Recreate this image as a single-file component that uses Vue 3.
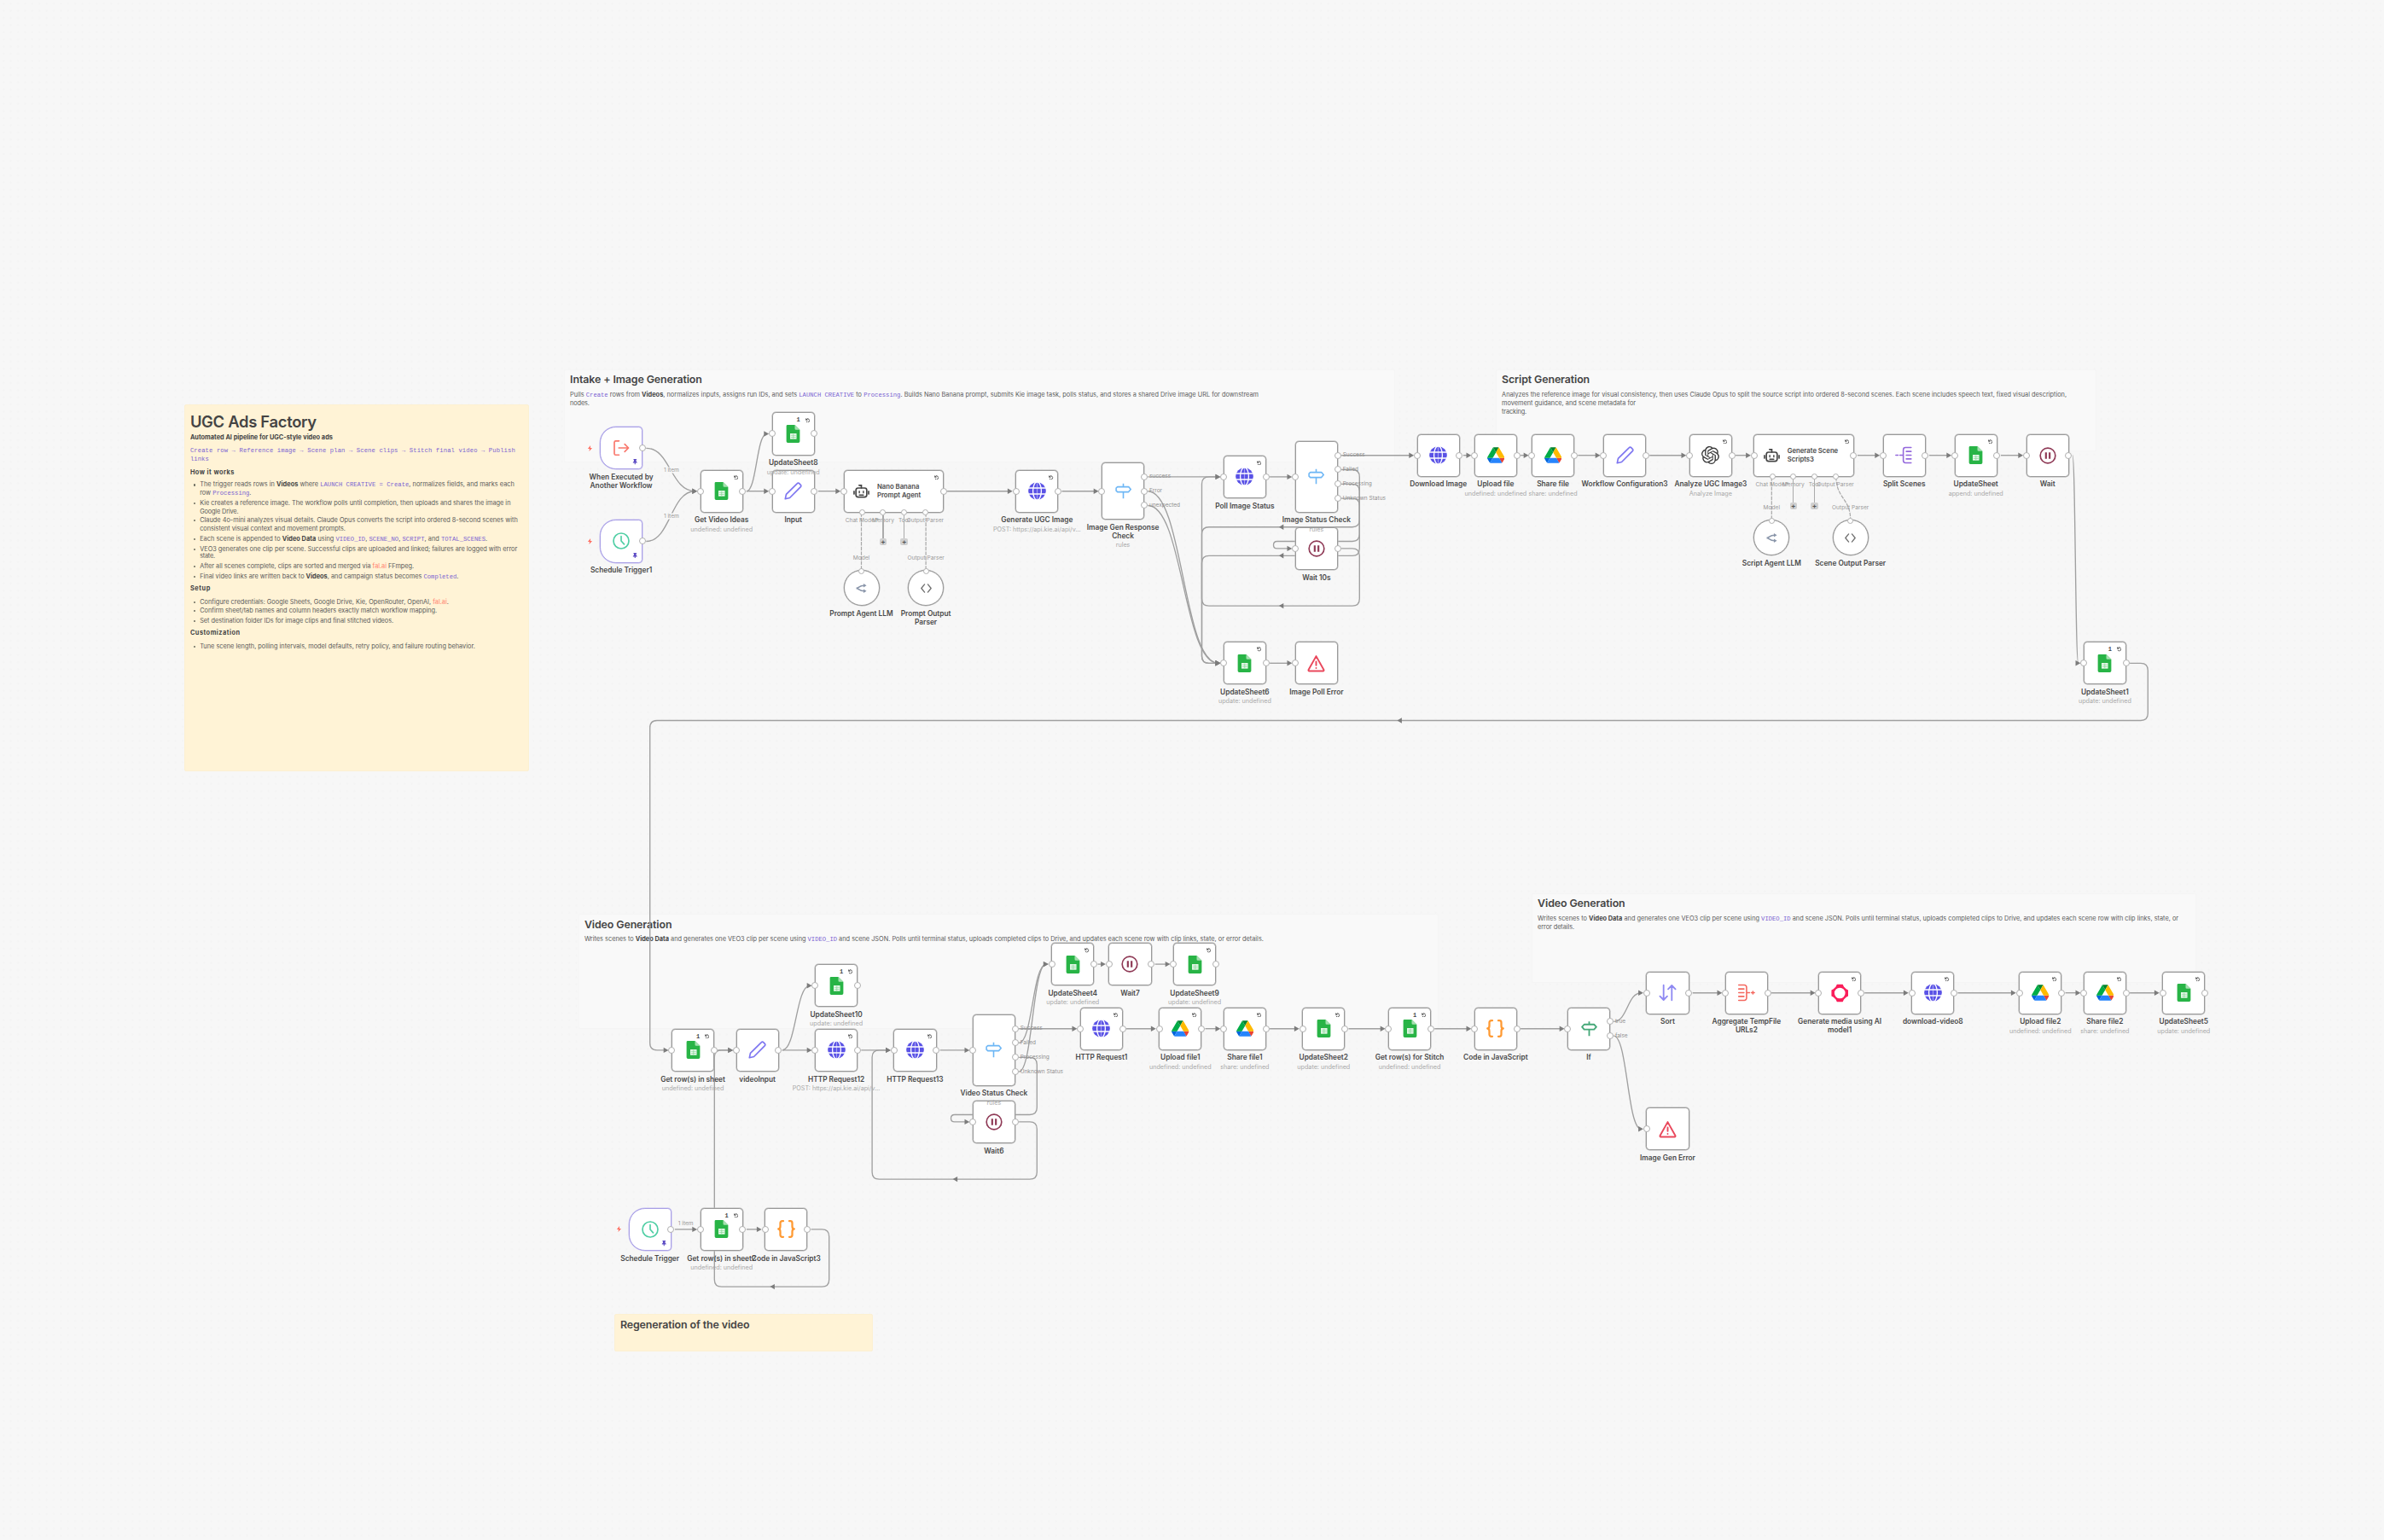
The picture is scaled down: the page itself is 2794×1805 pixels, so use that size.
<script setup>
// Canvas coordinates are expressed in grid cells; one cell is 8.4px on screen.
const G = 8.4
const OX = 820.5
const OY = 550.5
const px = (x) => OX + x * G
const py = (y) => OY + y * G

// Spreads a line of text to a given width through letter spacing.
const vFit = {
  mounted(el, { value }) {
    if (!value) return
    const n = el.textContent.length
    const natural = el.getBoundingClientRect().width
    el.style.letterSpacing = (value - natural) / n + 'px'
  },
}

const U = 'undefined: undefined'
const UP = 'update: undefined'
const POST = 'POST: https://api.kie.ai/api/v...'
const nodes = [
  { x: -14, y: -6, t: 'trigger', i: 'exec', l: 'When Executed by\nAnother Workflow' },
  { x: -14, y: 7, t: 'trigger', i: 'clock', l: 'Schedule Trigger1' },
  { x: 0, y: 0, i: 'sheet', l: 'Get Video Ideas', s: U, r: 1 },
  { x: 10, y: -8, i: 'sheet', l: 'UpdateSheet8', s: UP, r: 1, o: 1 },
  { x: 10, y: 0, i: 'pencil', l: 'Input' },
  { x: 20, y: 0, t: 'agent', i: 'robot', l: 'Nano Banana\nPrompt Agent', r: 1 },
  { x: 20, y: 14, t: 'sub', i: 'router', l: 'Prompt Agent LLM', e: 'Model' },
  { x: 29, y: 14, t: 'sub', i: 'code', l: 'Prompt Output\nParser', e: 'Output Parser' },
  { x: 44, y: 0, i: 'globe', l: 'Generate UGC Image', s: POST, r: 1 },
  { x: 56, y: -1, h: 8, i: 'sign', l: 'Image Gen Response\nCheck', s: 'rules', out: [[2, 'success'], [4, 'Error'], [6, 'unexpected']] },
  { x: 73, y: -2, i: 'globe', l: 'Poll Image Status', r: 1 },
  { x: 83, y: -4, h: 10, i: 'sign', l: 'Image Status Check', s: 'rules', out: [[2, 'Success'], [4, 'Failed'], [6, 'Processing'], [8, 'Unknown Status']] },
  { x: 83, y: 8, i: 'pause', l: 'Wait 10s' },
  { x: 73, y: 24, i: 'sheet', l: 'UpdateSheet6', s: UP, r: 1 },
  { x: 83, y: 24, i: 'warn', l: 'Image Poll Error', end: 1 },
  { x: 100, y: -5, i: 'globe', l: 'Download Image' },
  { x: 108, y: -5, i: 'drive', l: 'Upload file', s: U },
  { x: 116, y: -5, i: 'drive', l: 'Share file', s: 'share: undefined' },
  { x: 126, y: -5, i: 'pencil', l: 'Workflow Configuration3' },
  { x: 138, y: -5, i: 'openai', l: 'Analyze UGC Image3', s: 'Analyze Image', r: 1 },
  { x: 147, y: -5, t: 'agent', i: 'robot', l: 'Generate Scene\nScripts3', r: 1 },
  { x: 147, y: 7, t: 'sub', i: 'router', l: 'Script Agent LLM', e: 'Model' },
  { x: 158, y: 7, t: 'sub', i: 'code', l: 'Scene Output Parser', e: 'Output Parser' },
  { x: 165, y: -5, i: 'split', l: 'Split Scenes' },
  { x: 175, y: -5, i: 'sheet', l: 'UpdateSheet', s: 'append: undefined', r: 1 },
  { x: 185, y: -5, i: 'pause', l: 'Wait' },
  { x: 193, y: 24, i: 'sheet', l: 'UpdateSheet1', s: UP, r: 1, o: 1 },

  { x: 16, y: 69, i: 'sheet', l: 'UpdateSheet10', s: UP, r: 1, o: 1 },
  { x: -4, y: 78, i: 'sheet', l: 'Get row(s) in sheet', s: U, r: 1, o: 1 },
  { x: 5, y: 78, i: 'pencil', l: 'videoInput' },
  { x: 16, y: 78, i: 'globe', l: 'HTTP Request12', s: POST, r: 1 },
  { x: 27, y: 78, i: 'globe', l: 'HTTP Request13', r: 1 },
  { x: 38, y: 76, h: 10, i: 'sign', l: 'Video Status Check', s: 'rules', out: [[2, 'Success'], [4, 'Failed'], [6, 'Processing'], [8, 'Unknown Status']] },
  { x: 38, y: 88, i: 'pause', l: 'Wait6' },
  { x: 49, y: 66, i: 'sheet', l: 'UpdateSheet4', s: UP, r: 1 },
  { x: 57, y: 66, i: 'pause', l: 'Wait7' },
  { x: 66, y: 66, i: 'sheet', l: 'UpdateSheet9', s: UP, r: 1 },
  { x: 53, y: 75, i: 'globe', l: 'HTTP Request1', r: 1 },
  { x: 64, y: 75, i: 'drive', l: 'Upload file1', s: U, r: 1 },
  { x: 73, y: 75, i: 'drive', l: 'Share file1', s: 'share: undefined', r: 1 },
  { x: 84, y: 75, i: 'sheet', l: 'UpdateSheet2', s: UP, r: 1 },
  { x: 96, y: 75, i: 'sheet', l: 'Get row(s) for Stitch', s: U, r: 1, o: 1 },
  { x: 108, y: 75, i: 'braces', l: 'Code in JavaScript' },
  { x: 121, y: 75, i: 'signif', l: 'If', out: [[2, 'true'], [4, 'false']] },
  { x: 132, y: 70, i: 'sort', l: 'Sort' },
  { x: 132, y: 89, i: 'warn', l: 'Image Gen Error', end: 1 },
  { x: 143, y: 70, i: 'aggregate', l: 'Aggregate TempFile\nURLs2' },
  { x: 156, y: 70, i: 'media', l: 'Generate media using AI\nmodel1', r: 1 },
  { x: 169, y: 70, i: 'globe', l: 'download-video8', r: 1 },
  { x: 184, y: 70, i: 'drive', l: 'Upload file2', s: U, r: 1 },
  { x: 193, y: 70, i: 'drive', l: 'Share file2', s: 'share: undefined', r: 1 },
  { x: 204, y: 70, i: 'sheet', l: 'UpdateSheet5', s: UP, r: 1 },
  { x: -10, y: 103, t: 'trigger', i: 'clock', l: 'Schedule Trigger' },
  { x: 0, y: 103, i: 'sheet', l: 'Get row(s) in sheet2', s: U, r: 1, o: 1 },
  { x: 9, y: 103, i: 'braces', l: 'Code in JavaScript3' },
]

const nodeStyle = (n) => {
  const w = n.t === 'agent' ? 14 : n.t === 'sub' ? 5 : 6
  const h = n.t === 'sub' ? 5 : n.h || 6
  return { left: px(n.x) + 'px', top: py(n.y) + 'px', width: w * G + 'px', height: h * G + 'px' }
}

// Forward connections: [x1, y1, x2, y2, edge label]
const forward = [
  [-8, -3, 0, 3, '1 item'], [-8, 10, 0, 3, '1 item'], [6, 3, 10, -5], [6, 3, 10, 3], [16, 3, 20, 3],
  [34, 3, 44, 3], [50, 3, 56, 3], [62, 1, 73, 1], [62, 3, 73, 27], [62, 5, 73, 27], [79, 1, 83, 1],
  [79, 27, 83, 27], [89, -2, 100, -2], [106, -2, 108, -2], [114, -2, 116, -2], [122, -2, 126, -2],
  [132, -2, 138, -2], [144, -2, 147, -2], [161, -2, 165, -2], [171, -2, 175, -2], [181, -2, 185, -2],
  [191, -2, 193, 27],
  [2, 81, 5, 81], [11, 81, 16, 72], [11, 81, 16, 81], [22, 81, 27, 81], [33, 81, 38, 81],
  [44, 78, 53, 78], [44, 80, 49, 69], [44, 84, 49, 69], [55, 69, 57, 69], [63, 69, 66, 69],
  [59, 78, 64, 78], [70, 78, 73, 78], [79, 78, 84, 78], [90, 78, 96, 78], [102, 78, 108, 78],
  [114, 78, 121, 78], [127, 77, 132, 73], [127, 79, 132, 92], [138, 73, 143, 73], [149, 73, 156, 73],
  [162, 73, 169, 73], [175, 73, 184, 73], [190, 73, 193, 73], [199, 73, 204, 73],
  [-4, 106, 0, 106, '1 item'], [6, 106, 9, 106],
]
const curve = ([x1, y1, x2, y2]) => {
  const a = px(x1) + 4
  const b = px(x2) - 6
  const m = (a + b) / 2
  return `M${a} ${py(y1)}C${m} ${py(y1)} ${m} ${py(y2)} ${b} ${py(y2)}`
}

// Connections that run back to an earlier node: [x1, y1, x2, y2]
const backward = [
  [89, 0, 73, 27], [89, 2, 83, 11], [89, 4, 73, 27], [89, 11, 73, 1], [199, 27, -4, 81],
  [44, 82, 38, 91], [44, 91, 27, 81], [15, 106, 5, 81],
]
const loop = ([x1, y1, x2, y2]) => {
  const r = G
  const R = px(x1 + 3)
  const L = px(x2 - 3)
  const a = py(y1)
  const m = py(y1 + 8)
  const b = py(y2)
  const d = b > m ? 1 : -1
  const q = Math.min(r, Math.abs(b - m) / 2)
  return `M${px(x1) + 4} ${a}H${R - r}Q${R} ${a} ${R} ${a + r}V${m - r}Q${R} ${m} ${R - r} ${m}H${L + q}Q${L} ${m} ${L} ${m + d * q}V${b - d * q}Q${L} ${b} ${L + q} ${b}H${px(x2) - 6}`
}
const tip = (x, y) => `M${x - 5.8} ${y - 3.2}L${x} ${y}L${x - 5.8} ${y + 3.2}z`
const midTip = ([x1, y1, x2]) => {
  const x = (px(x1) + px(x2)) / 2 - 2
  const y = py(y1 + 8)
  return `M${x + 5.4} ${y - 3.2}L${x} ${y}L${x + 5.4} ${y + 3.2}z`
}

// Model and parser links hanging below the agents: [x1, y1, x2, y2]
const aiLinks = [[22.5, 6, 22.5, 14], [31.5, 6, 31.5, 14], [149.5, 1, 149.5, 7], [158.5, 1, 160.5, 7]]
const hang = ([x1, y1, x2, y2]) => {
  const m = (py(y1) + py(y2)) / 2
  return `M${px(x1)} ${py(y1)}C${px(x1)} ${m} ${px(x2)} ${m} ${px(x2)} ${py(y2)}`
}
const ports = ['Chat Model*', 'Memory', 'Tool', 'Output Parser']

// Each line: w = width, g = space above, k = kind, p = runs of [text, style]
const guide = [
  { w: 148, k: 'h1', p: [['UGC Ads Factory']] },
  { w: 167, g: 0, k: 'b', p: [['Automated AI pipeline for UGC-style video ads']] },
  { w: 381, g: 4.3, p: [['Create row → Reference image → Scene plan → Scene clips → Stitch final video → Publish', 'c']] },
  { w: 22, g: 0, p: [['links', 'c']] },
  { w: 52, g: 6.4, k: 'b', p: [['How it works']] },
  { w: 368.7, g: 4, k: 'li', p: [['The trigger reads rows in '], ['Videos', 'b'], [' where '], ['LAUNCH CREATIVE = Create', 'c'], [', normalizes fields, and marks each']] },
  { w: 60.3, g: -0.3, k: 'in', p: [['row '], ['Processing', 'c'], ['.']] },
  { w: 364.3, g: 1.7, k: 'li', p: [['Kie creates a reference image. The workflow polls until completion, then uploads and shares the image in']] },
  { w: 45.3, g: 0, k: 'in', p: [['Google Drive.']] },
  { w: 372.7, g: 0.3, k: 'li', p: [['Claude 4o-mini analyzes visual details. Claude Opus converts the script into ordered 8-second scenes with']] },
  { w: 170.7, g: 0, k: 'in', p: [['consistent visual context and movement prompts.']] },
  { w: 337, g: 2, k: 'li', p: [['Each scene is appended to '], ['Video Data', 'b'], [' using '], ['VIDEO_ID', 'c'], [', '], ['SCENE_NO', 'c'], [', '], ['SCRIPT', 'c'], [', and '], ['TOTAL_SCENES', 'c'], ['.']] },
  { w: 372, g: 2, k: 'li', p: [['VEO3 generates one clip per scene. Successful clips are uploaded and linked; failures are logged with error']] },
  { w: 17.7, g: -1.6, k: 'in', p: [['state.']] },
  { w: 251, g: 1.6, k: 'li', p: [['After all scenes complete, clips are sorted and merged via '], ['fal.ai', 'a'], [' FFmpeg.']] },
  { w: 303.3, g: 2, k: 'li', p: [['Final video links are written back to '], ['Videos', 'b'], [', and campaign status becomes '], ['Completed', 'c'], ['.']] },
  { w: 24, g: 4, k: 'b', p: [['Setup']] },
  { w: 291.7, g: 5.7, k: 'li', p: [['Configure credentials: Google Sheets, Google Drive, Kie, OpenRouter, OpenAI, '], ['fal.ai', 'a'], ['.']] },
  { w: 278, g: 0.3, k: 'li', p: [['Confirm sheet/tab names and column headers exactly match workflow mapping.']] },
  { w: 227, g: 2, k: 'li', p: [['Set destination folder IDs for image clips and final stitched videos.']] },
  { w: 58.7, g: 4, k: 'b', p: [['Customization']] },
  { w: 322.7, g: 6, k: 'li', p: [['Tune scene length, polling intervals, model defaults, retry policy, and failure routing behavior.']] },
]
const writes = [['Writes scenes to '], ['Video Data', 'b'], [' and generates one VEO3 clip per scene using '], ['VIDEO_ID', 'c']]
const tail = ' and scene JSON. Polls until terminal status, uploads completed clips to Drive, and updates each scene row with clip links, state, or'
const stickies = [
  { x: -72, y: -9.1, w: 48.1, h: 51.2, c: 'yellow guide', lines: guide },
  { x: -19, y: -14, w: 116, h: 13, c: 'pale', lines: [
    { w: 154.7, k: 'h2', p: [['Intake + Image Generation']] },
    { w: 807, g: 0, p: [['Pulls '], ['Create', 'c'], [' rows from '], ['Videos', 'b'], [', normalizes inputs, assigns run IDs, and sets '], ['LAUNCH CREATIVE', 'c'], [' to '], ['Processing', 'c'], ['. Builds Nano Banana prompt, submits Kie image task, polls status, and stores a shared Drive image URL for downstream']] },
    { w: 22.7, g: 0, p: [['nodes.']] },
  ] },
  { x: 111, y: -14, w: 83.8, h: 11.5, c: 'pale', lines: [
    { w: 103, k: 'h2', p: [['Script Generation']] },
    { w: 662, g: 0, p: [['Analyzes the reference image for visual consistency, then uses Claude Opus to split the source script into ordered 8-second scenes. Each scene includes speech text, fixed visual description,']] },
    { w: 157, g: 0, p: [['movement guidance, and scene metadata for']] },
    { w: 29, g: 0, p: [['tracking.']] },
  ] },
  { x: -17, y: 62, w: 120, h: 16, c: 'pale', lines: [
    { w: 102.5, k: 'h2', p: [['Video Generation']] },
    { w: 796, g: 0, p: [...writes, [tail + ' error details.']] },
  ] },
  { x: 116, y: 59.1, w: 92.8, h: 12.5, c: 'pale', lines: [
    { w: 102.5, k: 'h2', p: [['Video Generation']] },
    { w: 751, g: 0, p: [...writes, [tail]] },
    { w: 43, g: 0, p: [['error details.']] },
  ] },
  { x: -12, y: 117.8, w: 36.1, h: 5.2, c: 'yellow', lines: [{ w: 151.5, k: 'h2', p: [['Regeneration of the video']] }] },
]
const boxStyle = (s) => ({ left: px(s.x) + 'px', top: py(s.y) + 'px', width: s.w * G + 'px', height: s.h * G + 'px' })
</script>

<template>
  <main class="canvas">
    <svg class="defs" width="0" height="0">
      <symbol id="i-sheet" viewBox="0 0 24 24">
        <path fill="#28b446" d="M4.5 0h9.8L21 6.6V22a2 2 0 0 1-2 2H5a2 2 0 0 1-2-2V1.500A1.500 1.500 0 0 1 4.500 0z" />
        <path fill="#a5e0b0" d="M14.300 0 21 6.600h-5.200a1.500 1.500 0 0 1-1.500-1.500z" />
        <path fill="#eefaf0" d="M8 11.500h8.600v7.500H8z" />
        <path stroke="#8ad69a" stroke-width=".9" d="M8.800 14h7M8.800 16.500h7M12.300 12.200v6.200" />
      </symbol>
      <symbol id="i-drive" viewBox="0 0 87.3 78">
        <path d="m6.6 66.85 3.85 6.65c.8 1.4 1.95 2.5 3.3 3.3l13.75-23.8h-27.5c0 1.55.4 3.1 1.2 4.5z" fill="#0066da" />
        <path d="m43.65 25-13.75-23.8c-1.35.8-2.5 1.9-3.3 3.3l-25.4 44a9.06 9.06 0 0 0-1.2 4.5h27.5z" fill="#00ac47" />
        <path d="m73.55 76.8c1.35-.8 2.5-1.9 3.3-3.3l1.6-2.75 7.65-13.25c.8-1.4 1.2-2.95 1.2-4.5h-27.5l5.85 11.5z" fill="#ea4335" />
        <path d="m43.65 25 13.75-23.8c-1.35-.8-2.9-1.2-4.5-1.2h-18.5c-1.6 0-3.15.45-4.5 1.2z" fill="#00832d" />
        <path d="m59.8 53h-32.3l-13.75 23.8c1.35.8 2.9 1.2 4.5 1.2h50.8c1.6 0 3.15-.45 4.5-1.2z" fill="#2684fc" />
        <path d="m73.4 26.5-12.7-22c-.8-1.4-1.95-2.5-3.3-3.3l-13.75 23.8 16.15 28h27.45c0-1.55-.4-3.1-1.2-4.5z" fill="#ffba00" />
      </symbol>
      <symbol id="i-globe" viewBox="0 0 24 24">
        <circle cx="12" cy="12" r="11.8" fill="#5a52e6" />
        <g fill="none" stroke="#fff" stroke-width="1.5"><ellipse cx="12" cy="12" rx="5.600" ry="12.200" /><path d="M0 8h24M0 16h24" /></g>
        <path fill="none" stroke="#fff" stroke-width="1.3" d="M12 0v24" opacity=".45" />
      </symbol>
      <symbol id="i-pencil" viewBox="0 0 24 24">
        <path fill="none" stroke="#7d75f0" stroke-width="1.9" stroke-linejoin="round" d="m1.5 22.5 1.3-6L17.6 1.9a1.8 1.8 0 0 1 2.6 0l1.9 1.9a1.8 1.8 0 0 1 0 2.6L7.5 21.1z" />
      </symbol>
      <symbol id="i-robot" viewBox="0 0 24 24">
        <g fill="none" stroke="#454545" stroke-width="2.1"><rect x="4" y="7.6" width="16" height="13.4" rx="3.2" /><path d="M12 7.6V3.600H8.600M1.200 12.500v4M22.800 12.500v4" stroke-linecap="round" /></g>
        <path stroke="#454545" stroke-width="1.8" stroke-linecap="round" d="M9 12.300v2.400M15 12.300v2.400M9 18h6" />
      </symbol>
      <symbol id="i-router" viewBox="0 0 24 24">
        <path fill="none" stroke="#8a96aa" stroke-width="3" d="M1 12.3c5 0 6-6.2 17-6.2M1 11.7c5 0 6 6.2 17 6.2" />
        <path fill="#8a96aa" d="m16.5 1.8 6.7 4.3-6.7 4.2zM16.5 13.7l6.7 4.2-6.7 4.3z" />
      </symbol>
      <symbol id="i-code" viewBox="0 0 24 24">
        <path fill="none" stroke="#6e6e6e" stroke-width="2.4" stroke-linejoin="round" stroke-linecap="round" d="m8.5 3.5-7 8.5 7 8.5M15.5 3.5l7 8.5-7 8.5" />
      </symbol>
      <symbol id="i-sign" viewBox="0 0 24 24">
        <path fill="none" stroke="#6db6f5" stroke-width="2" stroke-linejoin="round" d="M3.400 5.800h16.400L23 9.600l-3.200 3.800H3.400L1.400 11.600V7.600zM12 1v4.800M12 13.400V23" />
      </symbol>
      <symbol id="i-signif" viewBox="0 0 24 24">
        <path fill="none" stroke="#45a878" stroke-width="2.3" stroke-linejoin="round" d="M4.6 6h14.6l3.4 3.6-3.4 3.8H4.6L1.4 9.6zM12 1.5V6M12 13.4V23" />
      </symbol>
      <symbol id="i-pause" viewBox="0 0 24 24">
        <g fill="none" stroke="#8f3a56" stroke-width="2"><circle cx="12" cy="12" r="10.6" /><path stroke-width="2.6" d="M9.4 7.6v8.8M14.6 7.6v8.8" /></g>
      </symbol>
      <symbol id="i-warn" viewBox="0 0 24 24">
        <path fill="none" stroke="#e9485c" stroke-width="2.2" stroke-linejoin="round" stroke-linecap="round" d="M12 2.4 1.8 20.6c-.4.8 0 1.6.9 1.6h18.6c.9 0 1.3-.8.9-1.6zM12 9.6v5M12 18.2v.2" />
      </symbol>
      <symbol id="i-exec" viewBox="0 0 24 24">
        <path fill="none" stroke="#f9776c" stroke-width="2" stroke-linejoin="round" stroke-linecap="round" d="M9 2.2H4.4A2 2 0 0 0 2.4 4v16a2 2 0 0 0 2 1.9H9M8.6 12h13.6M17 6.8l5.3 5.2-5.3 5.2" />
      </symbol>
      <symbol id="i-clock" viewBox="0 0 24 24">
        <path fill="none" stroke="#4fcea4" stroke-width="2" stroke-linecap="round" d="M12 1.2a10.8 10.8 0 1 0 0 21.6 10.8 10.8 0 0 0 0-21.6zM12 5.6V12l4.2 4.6" />
      </symbol>
      <symbol id="i-split" viewBox="0 0 24 24">
        <path fill="none" stroke="#9468dc" stroke-width="1.8" stroke-linecap="round" d="M1 12h3M6.5 12H11M21.5 1.800H14a3 3 0 0 0-3 3v14.400a3 3 0 0 0 3 3h7.500M15 7h6.500M15 12h6.500M15 17h6.500" />
      </symbol>
      <symbol id="i-aggregate" viewBox="0 0 24 24">
        <path fill="none" stroke="#f4685f" stroke-width="1.8" stroke-linecap="round" d="M2 1.800h7.500a3 3 0 0 1 3 3v14.400a3 3 0 0 1-3 3H2M2 7h7M2 12h7M2 17h7M13 12h3.500M19 12h4M21 10.200v3.600" />
      </symbol>
      <symbol id="i-openai" viewBox="0 0 24 24">
        <path fill="#3a3a3a" d="M22.28 9.82a5.98 5.98 0 0 0-.52-4.91 6.05 6.05 0 0 0-6.51-2.9A6.07 6.07 0 0 0 4.98 4.18a5.98 5.98 0 0 0-4 2.9 6.05 6.05 0 0 0 .75 7.1 5.98 5.98 0 0 0 .51 4.91 6.05 6.05 0 0 0 6.51 2.9A5.98 5.98 0 0 0 13.26 24a6.06 6.06 0 0 0 5.77-4.21 5.99 5.99 0 0 0 4-2.9 6.06 6.06 0 0 0-.75-7.07zm-9.02 12.61a4.48 4.48 0 0 1-2.88-1.04l.14-.08 4.78-2.76a.79.79 0 0 0 .39-.68v-6.74l2.02 1.17a.07.07 0 0 1 .04.05v5.58a4.5 4.5 0 0 1-4.49 4.5zM3.6 18.3a4.47 4.47 0 0 1-.54-3.01l.14.09 4.78 2.76a.77.77 0 0 0 .78 0l5.84-3.37v2.33a.08.08 0 0 1-.03.06L9.74 19.95a4.5 4.5 0 0 1-6.14-1.65zM2.34 7.9a4.49 4.49 0 0 1 2.37-1.98v5.68a.77.77 0 0 0 .39.68l5.81 3.35-2.02 1.17a.08.08 0 0 1-.07 0L3.99 14.01A4.5 4.5 0 0 1 2.34 7.9zm16.6 3.86L13.1 8.36l2.02-1.16a.08.08 0 0 1 .07 0l4.83 2.79a4.49 4.49 0 0 1-.68 8.1v-5.68a.79.79 0 0 0-.4-.65zm2.01-3.02-.14-.09-4.77-2.78a.78.78 0 0 0-.79 0L9.41 9.23V6.9a.07.07 0 0 1 .03-.06l4.83-2.79a4.5 4.5 0 0 1 6.68 4.69zM8.31 12.86 6.29 11.7a.08.08 0 0 1-.04-.06V6.07a4.5 4.5 0 0 1 7.38-3.45l-.14.08-4.78 2.76a.79.79 0 0 0-.39.68zm1.1-2.37L12.01 9l2.61 1.5v3l-2.6 1.5-2.61-1.5z" />
      </symbol>
      <symbol id="i-braces" viewBox="0 0 24 24">
        <path fill="none" stroke="#ff9a33" stroke-width="2.6" stroke-linecap="round" stroke-linejoin="round" d="M8 1.4H6.6A2.6 2.6 0 0 0 4 4v4.400c0 2-.8 3.600-2.600 3.600C3.200 12 4 13.600 4 15.600V20a2.600 2.600 0 0 0 2.600 2.600H8M16 1.400h1.400A2.600 2.600 0 0 1 20 4v4.400c0 2 .8 3.600 2.600 3.600-1.800 0-2.600 1.600-2.600 3.600V20a2.600 2.600 0 0 1-2.600 2.600H16" />
      </symbol>
      <symbol id="i-sort" viewBox="0 0 24 24">
        <path fill="none" stroke="#8f8af2" stroke-width="2.1" stroke-linecap="round" stroke-linejoin="round" d="M6.500 2v19.500M1.600 16.800l4.900 4.900 4.900-4.900M17.500 22V2.500M12.600 7.200l4.900-4.900 4.900 4.900" />
      </symbol>
      <symbol id="i-media" viewBox="0 0 24 24">
        <path fill="#fa1e5a" fill-rule="evenodd" d="M8 0h8l1.500 3.200L20.800 6.500 23.500 8v8l-2.700 1.500-3.300 3.300L16 24H8l-1.500-3.200-3.300-3.300L.5 16V8l2.700-1.500 3.300-3.300zM12 4.600a7.400 7.400 0 1 0 0 14.800 7.400 7.400 0 0 0 0-14.800z" />
      </symbol>
      <symbol id="i-retry" viewBox="0 0 12 12">
        <path fill="none" stroke="#4c4c4c" stroke-width="2.1" d="M1.500 1v4h4M1.800 4.800A4.600 4.600 0 1 1 2 8.600" />
      </symbol>
      <symbol id="i-pin" viewBox="0 0 12 12">
        <path fill="#5d4cc4" d="M2.500 0h7v1.600h-1V5l2 2v1.400H7V12H5V8.400H1.500V7l2-2V1.600h-1z" />
      </symbol>
      <symbol id="i-bolt" viewBox="0 0 12 12">
        <path fill="#ff6f62" d="M7 0 1.500 6.800H5L4.300 12l6-7H6.600z" />
      </symbol>
    </svg>

    <section v-for="(s, k) in stickies" :key="'s' + k" class="sticky" :class="s.c" :style="boxStyle(s)">
      <div v-for="(line, j) in s.lines" :key="j" class="line" :class="line.k" :style="{ marginTop: (line.g || 0) + 'px' }">
        <span v-fit="line.w" class="run"><span v-for="(r, m) in line.p" :key="m" :class="r[1]">{{ r[0] }}</span></span>
      </div>
    </section>

    <svg class="edges" width="2794" height="1805">
      <g class="wire">
        <path v-for="(e, k) in forward" :key="'f' + k" :d="curve(e)" />
        <path v-for="(e, k) in backward" :key="'b' + k" :d="loop(e)" />
      </g>
      <path v-for="(e, k) in aiLinks" :key="'a' + k" class="ai" :d="hang(e)" />
      <g class="tips">
        <path v-for="(e, k) in forward" :key="'t' + k" :d="tip(px(e[2]) - 3.4, py(e[3]))" />
        <path v-for="(e, k) in backward" :key="'u' + k" :d="tip(px(e[2]) - 3.4, py(e[3]))" />
        <path v-for="(e, k) in backward" :key="'m' + k" :d="midTip(e)" />
      </g>
    </svg>

    <template v-for="(e, k) in forward" :key="'l' + k">
      <span v-if="e[4]" class="edge-label" :class="{ above: e[1] === e[3] }" :style="{ left: (px(e[0]) + px(e[2])) / 2 + 'px', top: (py(e[1]) + py(e[3])) / 2 + 'px' }">{{ e[4] }}</span>
    </template>

    <article v-for="(n, k) in nodes" :key="'n' + k" class="node" :class="[n.t || 'box', 'is-' + n.i]" :style="nodeStyle(n)">
      <svg class="icon"><use :href="'#i-' + n.i" /></svg>
      <p v-if="n.t === 'agent'" class="inner">{{ n.l }}</p>
      <div class="badges"><b v-if="n.o">1</b><svg v-if="n.r"><use href="#i-retry" /></svg></div>
      <template v-if="n.t === 'trigger'">
        <svg class="bolt"><use href="#i-bolt" /></svg>
        <svg class="pin"><use href="#i-pin" /></svg>
      </template>
      <template v-if="n.t === 'sub'">
        <i class="dot north"></i>
        <span class="link-label">{{ n.e }}</span>
      </template>
      <template v-else>
        <i v-if="n.t !== 'trigger'" class="dot west"></i>
        <template v-if="n.out">
          <div v-for="o in n.out" :key="o[0]" class="out" :style="{ top: o[0] * G + 'px' }"><i class="dot"></i><span>{{ o[1] }}</span></div>
        </template>
        <i v-else-if="!n.end" class="dot east"></i>
      </template>
      <div v-if="n.t === 'agent'" class="ports">
        <div v-for="(p, j) in ports" :key="p" class="port">
          <i class="dot"></i><span>{{ p }}</span>
          <div v-if="j === 1 || j === 2" class="plus">+</div>
        </div>
      </div>
      <div v-else class="caption"><p>{{ n.l }}</p><small v-if="n.s">{{ n.s }}</small></div>
    </article>
  </main>
</template>

<style>
body { background: #f7f7f7; }
</style>

<style scoped>
.canvas {
  position: relative;
  width: 2794px;
  height: 1805px;
  overflow: hidden;
  background: radial-gradient(circle, #f4f4f4 0.8px, transparent 1.4px) 0 0 / 8.4px 8.4px #f7f7f7;
  font-family: Inter, "Liberation Sans", sans-serif;
  color: #4a4a4a;
}
.defs { position: absolute; }
p { margin: 0; }

.sticky { position: absolute; box-sizing: border-box; padding: 5.5px 6.2px; border: 1px solid; border-radius: 2px; overflow: hidden; }
.guide { padding-top: 6px; }
.yellow { background: #fff3d6; border-color: #fcf0d2; }
.pale { background: #f9f9f9; border-color: #f5f5f5; }
.line { height: 10px; font-size: 7.35px; line-height: 10px; white-space: nowrap; color: #595959; }
.run { display: inline-block; white-space: pre; }
.h1 { height: 27.4px; line-height: 26px; font-size: 18.4px; font-weight: 600; color: #444; }
.h2 { height: 18.2px; line-height: 11px; font-size: 12.4px; font-weight: 600; color: #444; }
.b { font-weight: 700; color: #444; }
.c { font-family: "Liberation Mono", monospace; font-size: 7.2px; color: #7a63d2; }
.a { color: #ff7b6b; }
.li, .in { padding-left: 11.3px; }
.li { position: relative; }
.li::before { content: ""; position: absolute; left: 4px; top: 4px; width: 2.6px; height: 2.6px; border-radius: 50%; background: #6a6a5c; }

.edges { position: absolute; left: 0; top: 0; }
.wire { fill: none; stroke: #a0a0a0; stroke-width: 1.35; }
.ai { fill: none; stroke: #a8a8a8; stroke-width: 1.2; stroke-dasharray: 4.5 1.2; }
.tips { fill: #7c7c7c; }
.edge-label { position: absolute; transform: translate(-50%, -50%); font-size: 6.6px; color: #999; background: #f7f7f7; line-height: 7px; white-space: nowrap; }
.edge-label.above { margin-top: -6.5px; background: none; }

.node { position: absolute; box-sizing: border-box; display: flex; align-items: center; justify-content: center; background: #fff; border: 1px solid #999; box-shadow: 0 0 0 0.5px #b4b4b4; border-radius: 4.2px; }
.trigger { border-color: #a9a0e6; box-shadow: 0 0 0 0.5px #c3bcf0; border-radius: 18.9px 4.2px 4.2px 18.9px; }
.sub { border-radius: 50%; }
.icon { width: 21px; height: 21px; display: block; }
.is-drive .icon { width: 20.5px; height: 19px; }
.is-sign .icon, .is-signif .icon { width: 19px; height: 19px; }
.is-code .icon, .is-router .icon { width: 15px; height: 13px; }
.is-pause .icon, .is-exec .icon, .is-clock .icon { width: 20px; height: 20px; }
.is-media .icon { width: 20.5px; height: 22px; }
.agent { justify-content: flex-start; padding-left: 10.5px; gap: 9px; }
.agent .icon { width: 19px; height: 19px; }
.inner { font-size: 7.7px; font-weight: 600; line-height: 10px; white-space: pre; }

.badges { position: absolute; right: 4.8px; top: 5px; display: flex; gap: 6px; align-items: center; height: 6px; }
.badges b { font: 700 7px/6px "Liberation Mono", monospace; color: #444; }
.badges svg { width: 5.4px; height: 5.4px; }
.bolt { position: absolute; left: -16px; top: 50%; width: 7px; height: 7px; margin-top: -3.5px; }
.pin { position: absolute; right: 4.5px; bottom: 4.5px; width: 6.5px; height: 6.5px; }

.dot { position: absolute; box-sizing: border-box; width: 8px; height: 8px; margin: -4px; border: 1px solid #b0b0b0; border-radius: 50%; background: #fff; }
.west { left: -0.6px; top: 50%; }
.east { left: calc(100% + 0.6px); top: 50%; }
.north { left: 50%; top: 0; width: 7px; height: 7px; margin: -3.5px; }
.out { position: absolute; left: calc(100% + 0.6px); display: flex; align-items: center; height: 0; margin-top: -1px; font-size: 6.5px; color: #8f8f8f; }
.out .dot { top: 0; left: 0; }
.out span { padding-left: 6px; white-space: nowrap; line-height: 7px; }
.link-label { position: absolute; left: 50%; top: -15.5px; transform: translate(-50%, -50%); font-size: 6.6px; line-height: 7px; color: #999; white-space: nowrap; }

.ports { position: absolute; left: 8.4px; right: 8.4px; top: 100%; display: flex; }
.port { position: relative; flex: 1; display: flex; flex-direction: column; align-items: center; height: 40px; font-size: 6.6px; line-height: 7px; color: #999; }
.port .dot { left: 50%; top: 0.5px; width: 7px; height: 7px; margin: -3.5px; }
.port span { white-space: nowrap; margin: 7px -20px 0; }
.plus { position: relative; margin-top: 17px; width: 8.4px; height: 8.4px; border-radius: 2px; background: #d0d0d0; color: #555; text-align: center; line-height: 8px; font-size: 8px; font-weight: 700; }
.plus::before { content: ""; position: absolute; left: 3.7px; top: -27px; width: 1.2px; height: 27px; background: #ababab; }

.caption { position: absolute; z-index: 2; left: 50%; top: calc(100% + 4.5px); transform: translateX(-50%); display: flex; flex-direction: column; align-items: center; text-align: center; white-space: pre; }
.caption p { font-size: 8.3px; line-height: 10px; font-weight: 600; color: #4a4a4a; }
.caption small { font-size: 7.2px; line-height: 8px; margin-top: 2.5px; color: #a8a8a8; }
</style>
